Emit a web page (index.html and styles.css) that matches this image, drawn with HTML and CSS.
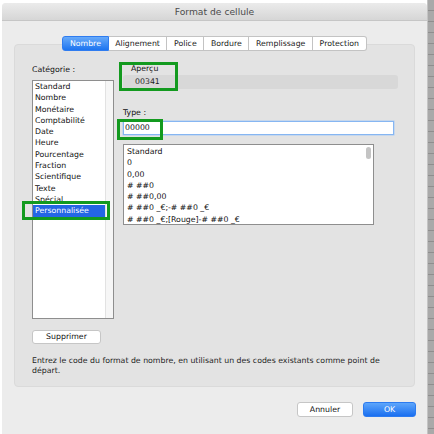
FILE: index.html
```html
<!DOCTYPE html>
<html lang="fr">
<head>
<meta charset="utf-8">
<title>Format de cellule</title>
<link rel="stylesheet" href="styles.css">
</head>
<body>
<div class="screen">
  <div class="window">
    <div class="titlebar">Format de cellule</div>
    <div class="tabs">
      <div class="tab active">Nombre</div>
      <div class="tab">Alignement</div>
      <div class="tab">Police</div>
      <div class="tab">Bordure</div>
      <div class="tab">Remplissage</div>
      <div class="tab">Protection</div>
    </div>
    <div class="panel">
      <div class="row">
        <div class="leftcol">
          <div class="label">Catégorie :</div>
          <div class="catlist">
            <div class="items">
              <div class="item">Standard</div>
              <div class="item">Nombre</div>
              <div class="item">Monétaire</div>
              <div class="item">Comptabilité</div>
              <div class="item">Date</div>
              <div class="item">Heure</div>
              <div class="item">Pourcentage</div>
              <div class="item">Fraction</div>
              <div class="item">Scientifique</div>
              <div class="item">Texte</div>
              <div class="item">Spécial</div>
              <div class="item selected">Personnalisée</div>
            </div>
            <div class="track"></div>
            <div class="mark mark-cat"></div>
          </div>
        </div>
        <div class="rightcol">
          <div class="preview-block">
            <div class="label indent">Aperçu</div>
            <div class="preview">00341</div>
            <div class="mark mark-preview"></div>
          </div>
          <div class="label type-label">Type :</div>
          <div class="input-wrap">
            <div class="input">00000</div>
            <div class="mark mark-type"></div>
          </div>
          <div class="fmtlist">
            <div class="fitem">Standard</div>
            <div class="fitem">0</div>
            <div class="fitem">0,00</div>
            <div class="fitem"># ##0</div>
            <div class="fitem"># ##0,00</div>
            <div class="fitem"># ##0 _€;-# ##0 _€</div>
            <div class="fitem"># ##0 _€;[Rouge]-# ##0 _€</div>
            <div class="thumb"></div>
          </div>
        </div>
      </div>
      <div class="btn small">Supprimer</div>
      <p class="desc">Entrez le code du format de nombre, en utilisant un des codes existants comme point de départ.</p>
    </div>
    <div class="footer">
      <div class="btn cancel">Annuler</div>
      <div class="btn ok">OK</div>
    </div>
  </div>
  <div class="desktop"></div>
</div>
</body>
</html>
```

FILE: styles.css
```css
html, body {
  margin: 0;
  padding: 0;
  background: #ffffff;
}
.screen {
  width: 434px;
  height: 434px;
  display: flex;
  overflow: hidden;
  font-family: "DejaVu Sans", "Liberation Sans", sans-serif;
  font-size: 7.8px;
  color: #111;
}
.window {
  margin-left: 2px;
  margin-top: 3px;
  width: 425px;
  height: 440px;
  background: #ececec;
  border-top-left-radius: 4px;
  border-top-right-radius: 4px;
  display: flex;
  flex-direction: column;
}
.desktop {
  flex: 1;
  background-color: #a9a9a9;
  background-image: repeating-linear-gradient(180deg, transparent 0 10px, #8e8e8e 10px 11px);
  border-left: 1px solid #c4c4c4;
}
.titlebar {
  height: 17px;
  line-height: 18px;
  text-align: center;
  font-size: 9.2px;
  color: #4c4c4c;
  background: linear-gradient(#ebebeb, #d6d6d6);
  border-bottom: 1px solid #c6c6c6;
  border-top-left-radius: 4px;
  border-top-right-radius: 4px;
}
.tabs {
  margin-top: 15px;
  display: flex;
  justify-content: center;
  position: relative;
  z-index: 1;
}
.tab {
  height: 13px;
  line-height: 13px;
  padding: 0 6.6px;
  background: #ffffff;
  border: 1px solid #c3c3c3;
  border-left: none;
  color: #1a1a1a;
}
.tab:first-child {
  border-left: 1px solid #3b86f3;
  border-radius: 3px 0 0 3px;
}
.tab:last-child {
  border-radius: 0 3px 3px 0;
}
.tab.active {
  background: linear-gradient(#67aafa, #1d74f0);
  border-color: #2f7cf0;
  color: #ffffff;
}
.panel {
  margin: -7px 12px 0 12px;
  background: #e3e3e3;
  border: 1px solid #dadada;
  border-radius: 4px;
  padding: 19px 16px 10px 17px;
}
.row {
  display: flex;
  gap: 9px;
}
.leftcol {
  width: 82px;
  padding-top: 1px;
}
.label {
  height: 10px;
  line-height: 10px;
}
.label.indent {
  padding-left: 8px;
}
.catlist {
  margin-top: 5px;
  height: 237px;
  border: 1px solid #8e8e8e;
  background: #ffffff;
  display: flex;
  position: relative;
}
.items {
  flex: 1;
}
.item {
  height: 11.3px;
  line-height: 11.3px;
  padding-left: 2px;
  color: #111;
}
.item.selected {
  background: #2466e4;
  color: #ffffff;
}
.track {
  width: 7px;
  background: #f6f6f6;
  border-left: 1px solid #e2e2e2;
}
.rightcol {
  width: 275px;
}
.preview-block {
  position: relative;
}
.preview {
  margin-top: 1px;
  height: 14px;
  line-height: 14px;
  padding-left: 12px;
  background: #d8d8d8;
  border-radius: 3px;
  color: #1e1e1e;
}
.type-label {
  margin-top: 19px;
}
.input-wrap {
  position: relative;
  margin-top: 3px;
  width: 271px;
}
.input {
  height: 12px;
  line-height: 12px;
  padding-left: 1px;
  background: #ffffff;
  border: 1.5px solid #86b6f2;
  box-shadow: 0 0 0 0.5px #a9cbf6;
  color: #111;
}
.fmtlist {
  position: relative;
  margin-top: 9px;
  width: 249px;
  height: 78px;
  padding-top: 1px;
  background: #ffffff;
  border: 1px solid #8e8e8e;
  overflow: hidden;
}
.fitem {
  height: 11.3px;
  line-height: 11.3px;
  padding-left: 3px;
  color: #111;
}
.thumb {
  position: absolute;
  right: 2px;
  top: 2px;
  width: 5px;
  height: 12px;
  border-radius: 3px;
  background: #c4c4c4;
}
.mark {
  position: absolute;
  border: 3px solid #139a1f;
  pointer-events: none;
}
.mark-cat {
  left: -11px;
  top: 120px;
  width: 82px;
  height: 13px;
}
.mark-preview {
  left: -4px;
  top: -2px;
  width: 53px;
  height: 23px;
}
.mark-type {
  left: -6px;
  top: -2px;
  width: 40px;
  height: 15px;
}
.btn {
  background: #ffffff;
  border: 1px solid #c6c6c6;
  border-radius: 3px;
  text-align: center;
  color: #111;
  box-sizing: border-box;
}
.btn.small {
  margin-top: 11px;
  width: 69px;
  height: 14px;
  line-height: 12px;
}
.desc {
  margin: 12px 0 0 0;
  line-height: 10px;
  color: #1e1e1e;
  padding-right: 10px;
}
.footer {
  display: flex;
  justify-content: flex-end;
  gap: 10px;
  margin: 15px 11px 0 0;
}
.btn.cancel {
  width: 56px;
  height: 15px;
  line-height: 13px;
}
.btn.ok {
  width: 53px;
  height: 15px;
  line-height: 13px;
  background: linear-gradient(#5ea6fb, #1a6ff0);
  border-color: #2c7bf0;
  color: #ffffff;
}
```
